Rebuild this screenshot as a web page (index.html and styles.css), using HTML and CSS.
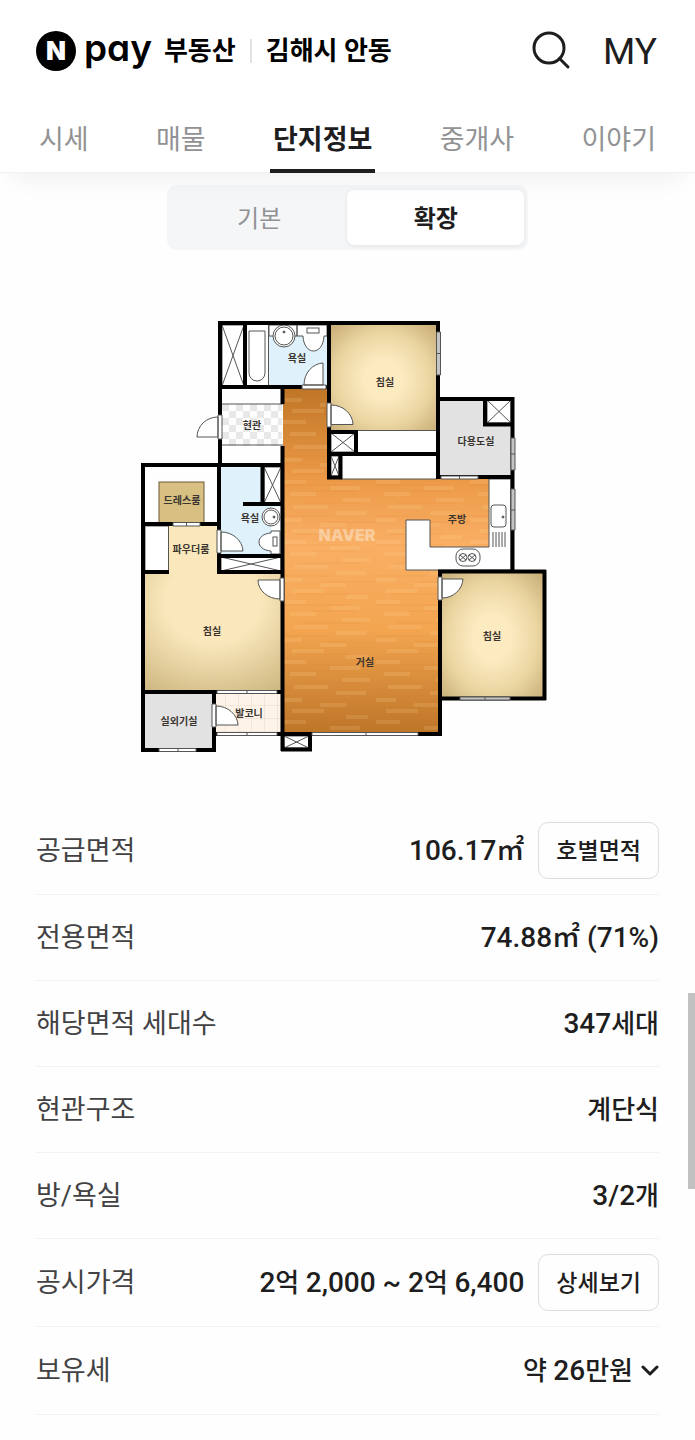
FILE: index.html
```
<!DOCTYPE html>
<html lang="ko">
<head>
    <meta charset="UTF-8">
    <meta name="viewport" content="width=device-width, initial-scale=1.0">
    <title>부동산 단지정보</title>
    <link rel="stylesheet" href="styles.css">
</head>
<body>

    <header class="header">
        <div class="top-bar">
            <a class="logo" href="#"><span class="logo-mark">N</span><span class="logo-pay">pay</span></a>
            <a class="service" href="#">부동산</a>
            <a class="region" href="#">김해시 안동</a>
            <button class="search-btn" type="button" aria-label="검색">
                <svg width="40" height="40" viewBox="0 0 40 40" fill="none" stroke="#1e1e20" stroke-width="3" stroke-linecap="round">
                    <circle cx="18" cy="17" r="15"/>
                    <path d="M28.500 27.500L37 36"/>
                </svg>
            </button>
            <a class="my" href="#">MY</a>
        </div>
        <nav class="tabs">
            <a href="#">시세</a>
            <a href="#">매물</a>
            <a class="active" href="#">단지정보</a>
            <a href="#">중개사</a>
            <a href="#">이야기</a>
        </nav>
    </header>

    <main>
        <div class="segment">
            <button type="button">기본</button>
            <button class="selected" type="button">확장</button>
        </div>

        <!-- Floor plan -->
        <figure class="plan">
            <svg viewBox="138 315 420 440" role="img" aria-label="평면도">
                <defs>
                    <linearGradient id="wood" x1="0" y1="389" x2="0" y2="733" gradientUnits="userSpaceOnUse">
                        <stop offset="0" stop-color="#bf7627"/>
                        <stop offset="0.25" stop-color="#eb9845"/>
                        <stop offset="0.45" stop-color="#f9af64"/>
                        <stop offset="0.7" stop-color="#f3a550"/>
                        <stop offset="1" stop-color="#bd7528"/>
                    </linearGradient>
                    <radialGradient id="room" cx="0.5" cy="0.52" r="0.72">
                        <stop offset="0.25" stop-color="#fcebc1"/>
                        <stop offset="0.6" stop-color="#ebd6a2"/>
                        <stop offset="1" stop-color="#c5a972"/>
                    </radialGradient>
                    <radialGradient id="master" cx="0.5" cy="0.25" r="0.85">
                        <stop offset="0.4" stop-color="#fae8bc"/>
                        <stop offset="1" stop-color="#d0ba84"/>
                    </radialGradient>
                    <pattern id="planks" width="94" height="60" patternUnits="userSpaceOnUse">
                        <path d="M0 2h24M48 8h30M8 14h26M60 20h28M12 27h34M54 33h30M0 40h20M38 45h26M10 51h32M64 57h22" stroke="#ffd79c" stroke-width="4" opacity="0.16"/>
                        <path d="M0 5h68M30 11h44M20 23h60M0 36h50M44 42h50M14 54h54" stroke="#c8681c" stroke-width="1" opacity="0.14"/>
                    </pattern>
                    <pattern id="checker" x="222" y="404" width="14" height="14" patternUnits="userSpaceOnUse">
                        <path d="M0 0h7v7h-7zM7 7h7v7h-7z" fill="#e8e8e8"/>
                    </pattern>
                    <pattern id="tile" x="212" y="692" width="13" height="13" patternUnits="userSpaceOnUse">
                        <path d="M0 0H13M0 0V13" stroke="#ead8c8"/>
                    </pattern>
                </defs>

                <!-- floors -->
                <path d="M283 387H329V478H489V547H429V570H440V734H283Z" fill="url(#wood)"/>
                <path d="M283 387H329V478H489V547H429V570H440V734H283Z" fill="url(#planks)"/>
                <rect x="330" y="324" width="107" height="106" fill="url(#room)"/>
                <rect x="440" y="572" width="104" height="126" fill="url(#room)"/>
                <rect x="144" y="572" width="137" height="120" fill="url(#master)"/>
                <rect x="168" y="525" width="50" height="49" fill="#fae8bc"/>
                <rect x="159" y="482" width="45" height="41" fill="#d8bf82" stroke="#6b5b34"/>
                <rect x="439" y="399" width="73" height="78" fill="#e2e2e3"/>
                <rect x="144" y="692" width="70" height="58" fill="#e2e2e3"/>
                <rect x="214" y="692" width="68" height="42" fill="#fdf3e8"/>
                <rect x="214" y="692" width="68" height="42" fill="url(#tile)"/>
                <rect x="268" y="324" width="60" height="63" fill="#dff1fa"/>
                <path d="M220 466H262V504H281V556H220Z" fill="#dff1fa"/>
                <rect x="222" y="404" width="60" height="42" fill="url(#checker)"/>

                <!-- fittings -->
                <g fill="#fff" stroke="#555" stroke-width="1">
                    <path d="M222 404H283M222 445H283" fill="none"/>
                    <path d="M246 325H268.500V385H246Z" stroke="none"/>
                    <path d="M268.500 325V385" fill="none"/>
                    <path d="M249 331H265V373A8 8 0 0 1 249 373Z"/>
                    <path d="M269 325H327V336H324C323 356 304 356 303 336H297V325V336H269Z"/>
                    <circle cx="284" cy="336" r="11"/>
                    <circle cx="284" cy="336" r="9"/>
                    <circle cx="284" cy="332" r="1" fill="#555"/>
                    <rect x="307" y="328" width="12" height="5"/>
                    <path d="M271 507H280V530H271Z" stroke="none"/>
                    <path d="M271 531H280V554H271V551C255 550 255 534 271 533Z"/>
                    <rect x="273" y="537" width="4" height="9"/>
                    <circle cx="271" cy="517" r="9"/>
                    <circle cx="271" cy="517" r="7"/>
                    <circle cx="274" cy="517" r="1" fill="#555"/>
                    <path d="M406 520H430V547H489V479H511V570H406Z"/>
                    <rect x="491" y="505" width="15" height="22" rx="3"/>
                    <circle cx="503" cy="517" r="1" fill="#555"/>
                    <path d="M493 532V547M496 532V547M499 532V547M502 532V547M505 532V547"/>
                    <rect x="456" y="549" width="24" height="17" rx="7"/>
                    <circle cx="463" cy="557.500" r="4"/>
                    <circle cx="472" cy="557.500" r="4"/>
                    <path d="M460 555L466 560M466 555L460 560M469 555L475 560M475 555L469 560"/>
                    <path d="M331 430.500H437V453H331Z"/>
                    <path d="M341 455H437V479H341Z"/>
                    <path d="M145 526H168.500V571H145Z"/>
                    <path d="M222 325H244V386H222ZM222 325L244 386M244 325L222 386"/>
                    <path d="M331 433H355V452H331ZL355 452M355 433L331 452"/>
                    <path d="M331 456H339V476H331ZL339 476M339 456L331 476"/>
                    <path d="M487 400H511V423H487ZL511 423M511 400L487 423"/>
                    <path d="M264 467H281V503H264ZL281 503M281 467L264 503"/>
                    <path d="M221 557H281V571H221ZL281 571M281 557L221 571"/>
                    <path d="M284 736H309V748H284ZL309 748M309 736L284 748"/>
                </g>

                <!-- walls -->
                <path class="wall" d="M220 321V466M220 323H439M245 323V387M218 387H329M329 321V479M438 321V479M282.500 387V404M282.500 446V466M329 432H357M356 430V454M327 454H438M340.500 454V479M327 477.500H342M438 399H514M512.500 397V573M485 399V425M483 424.500H512M436 477H514M141 465H284M143 463V752M282.500 463V736M219 463V574M262.500 465V504M243 504H282M141 524H219M219 556H282M219 572H282M141 572H169M438 571.500H546M440 570V735M544.500 570V700M438 698.500H546M141 692H282M214 690V752M141 750H216M215 734H442M282.500 734V751M310 734V751M281 749.500H312"/>

                <!-- windows -->
                <g fill="#c4c4c4" stroke="#555">
                    <path d="M436.500 332H440.500V375H436.500ZM436.500 353.500H440.500"/>
                    <path d="M511 438H515V470H511ZM511 454H515"/>
                    <path d="M511 489H515V530H511ZM511 510H515"/>
                    <path d="M460 697H510V700H460ZM485 697V700"/>
                </g>
                <g fill="#fff" stroke="#555">
                    <path d="M441 476H478V479H441ZM459.500 476V479"/>
                    <path d="M173 522.500H200V526H173ZM186.500 522V526"/>
                    <path d="M217 690.500H277V693.500H217ZM247 690V694"/>
                    <path d="M217 732.500H277V735.500H217ZM247 732V736"/>
                    <path d="M159 748.500H196V751.500H159ZM178 748V752"/>
                    <path d="M312 732.500H418V735.500H312ZM366 732V736"/>
                </g>

                <!-- doors -->
                <g fill="#fff" stroke="#555" stroke-width="1">
                    <path d="M218 415H222V439H218ZM218 417A21 20 0 0 0 197 437H218Z"/>
                    <path d="M302 385H326V389H302ZM323 363A20 22 0 0 0 304 385H323Z"/>
                    <path d="M327 403H331V427H327ZM331 405A22 20 0 0 1 353 424.500H331Z"/>
                    <path d="M217 530H221V553H217ZM221 532A22 20 0 0 1 243 551H221Z"/>
                    <path d="M280 578H284V601H280ZM280 580H258A22 19 0 0 0 280 599Z"/>
                    <path d="M438 577H442V600H438ZM442 579H463A21 20 0 0 1 442 598Z"/>
                    <path d="M212 704H216V727H212ZM216 706A22 20 0 0 1 238 725H216Z"/>
                </g>

                <text class="watermark" x="347" y="541">NAVER</text>
                <g class="room-name">
                    <text x="297" y="362">욕실</text>
                    <text x="385" y="386">침실</text>
                    <text x="252" y="429">현관</text>
                    <text x="476" y="445">다용도실</text>
                    <text x="182" y="504">드레스룸</text>
                    <text x="250" y="522">욕실</text>
                    <text x="457" y="523">주방</text>
                    <text x="191" y="553">파우더룸</text>
                    <text x="212" y="635">침실</text>
                    <text x="492" y="640">침실</text>
                    <text x="365" y="666">거실</text>
                    <text x="249" y="717">발코니</text>
                    <text x="179" y="725">실외기실</text>
                </g>
            </svg>
        </figure>

        <dl class="info">
            <div class="row">
                <dt>공급면적</dt>
                <dd><span class="num">106.17㎡</span><button type="button">호별면적</button></dd>
            </div>
            <div class="row">
                <dt>전용면적</dt>
                <dd><span class="num">74.88㎡ (71%)</span></dd>
            </div>
            <div class="row">
                <dt>해당면적 세대수</dt>
                <dd><span><span class="num">347</span>세대</span></dd>
            </div>
            <div class="row">
                <dt>현관구조</dt>
                <dd>계단식</dd>
            </div>
            <div class="row">
                <dt>방/욕실</dt>
                <dd><span><span class="num">3/2</span>개</span></dd>
            </div>
            <div class="row">
                <dt>공시가격</dt>
                <dd><span><span class="num">2</span>억 <span class="num">2,000 ~ 2</span>억 <span class="num">6,400</span></span><button type="button">상세보기</button></dd>
            </div>
            <div class="row expandable">
                <dt>보유세</dt>
                <dd>
                    <span>약 <span class="num">26</span>만원</span>
                    <svg width="18" height="12" viewBox="0 0 18 12" fill="none" stroke="#1e1e20" stroke-width="3" stroke-linecap="round" stroke-linejoin="round">
                        <path d="M2 2L9 9L16 2"/>
                    </svg>
                </dd>
            </div>
        </dl>
    </main>

    <div class="scroll-thumb"></div>

</body>
</html>
```
FILE: styles.css
```
* {
    box-sizing: border-box;
}

body {
    margin: 0;
    background-color: #fefefe;
    color: #1e1e20;
    font-family: Roboto, 'Noto Sans CJK KR', sans-serif;
    font-size: 27px;
    line-height: 40px;
}

a {
    color: inherit;
    text-decoration: none;
}

button {
    padding: 0;
    border: none;
    background: none;
    color: inherit;
    font-family: inherit;
    cursor: pointer;
}

/* Header */
.header {
    position: relative;
    z-index: 1;
    background-color: #fff;
    border-bottom: 1px solid #f1f1f2;
    box-shadow: 0 16px 24px -12px rgba(0, 0, 0, 0.07);
}

.top-bar {
    display: flex;
    align-items: center;
    height: 102px;
    padding: 0 38px 0 36px;
    color: #000;
    font-size: 26px;
    font-weight: 700;
}

.logo {
    display: flex;
    align-items: center;
    gap: 8px;
    font-family: Inter, sans-serif;
}

.logo-mark {
    width: 40px;
    height: 40px;
    border-radius: 50%;
    background-color: #000;
    color: #fff;
    font-size: 26px;
    font-weight: 900;
    text-align: center;
}

.logo-pay {
    padding-bottom: 6px;
    font-size: 37px;
    font-weight: 600;
    font-feature-settings: 'cv11'; /* single-storey a */
}

.service {
    margin-left: 12px;
}

.region {
    margin-left: 14px;
    background: linear-gradient(#e3e3e3, #e3e3e3) left center / 2px 24px no-repeat;
    padding-left: 16px;
}

.search-btn {
    display: flex;
    margin-left: auto;
}

.my {
    margin-left: 32px;
    padding-top: 2px;
    color: #1e1e20;
    font-size: 37px;
    font-weight: 400;
}

.tabs {
    display: flex;
    justify-content: space-between;
    padding: 0 36px;
    color: #929294;
}

.tabs a {
    height: 70px;
    padding: 18px 3px 0;
}

.tabs .active {
    border-bottom: 4px solid #1e1e20;
    margin-bottom: -1px;
    height: 71px;
    color: #1e1e20;
    font-weight: 700;
}

/* Basic / extended switch */
.segment {
    display: grid;
    grid-template-columns: 1fr 1fr;
    width: 52%;
    margin: 12px auto 0;
    padding: 5px 4px;
    border-radius: 10px;
    background-color: #f4f6f8;
}

.segment button {
    height: 55px;
    padding-bottom: 3px;
    border-radius: 7px;
    color: #929294;
    font-size: 24px;
}

.segment .selected {
    background-color: #fff;
    box-shadow: 0 1px 4px rgba(0, 0, 0, 0.08);
    color: #1e1e20;
    font-weight: 700;
}

/* Floor plan */
.plan {
    display: flex;
    justify-content: center;
    margin: 65px 36px 52px;
}

.plan svg {
    width: 420px;
    max-width: 100%;
}

.wall {
    fill: none;
    stroke: #000;
    stroke-width: 4px;
}

.room-name {
    fill: #3b3530;
    font-size: 10px;
    font-weight: 700;
    text-anchor: middle;
}

.watermark {
    fill: #fff;
    fill-opacity: 0.4;
    font-family: Inter, sans-serif;
    font-size: 16px;
    font-weight: 900;
    text-anchor: middle;
}

/* Complex information */
.info {
    margin: 0 36px;
    padding-bottom: 24px;
}

.row {
    display: flex;
    justify-content: space-between;
    align-items: center;
    min-height: 86px;
    border-bottom: 1px solid #f2f2f3;
}

.row dt {
    color: #424244;
}

.row dd {
    display: flex;
    align-items: center;
    margin: 0;
    font-weight: 500;
    font-size: 26px;
}

.row .num {
    font-size: 28px;
}

.row dd button {
    height: 57px;
    margin: 15px 0 15px 14px;
    padding: 0 17px 4px;
    border: 1px solid #dcdcde;
    border-radius: 10px;
    font-size: 23px;
    font-weight: 500;
}

.expandable {
    min-height: 88px;
}

.expandable dd {
    gap: 8px;
}

.scroll-thumb {
    position: absolute;
    top: 993px;
    right: 0;
    width: 7px;
    height: 196px;
    background-color: #c1c1c1;
}
```
